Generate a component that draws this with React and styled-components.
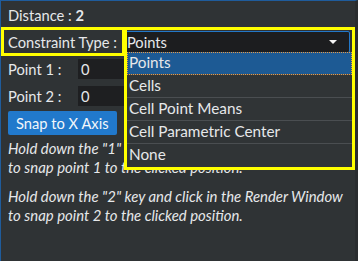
import React from "react";
import styled, { createGlobalStyle } from "styled-components";

const Global = createGlobalStyle`
  html, body {
    margin: 0;
    padding: 0;
    background: #2f3335;
  }
  body {
    font-family: Lato, "Open Sans", sans-serif;
    color: #e6e8ea;
  }
`;

const Panel = styled.div`
  position: relative;
  box-sizing: border-box;
  width: 358px;
  height: 261px;
  overflow: hidden;
  background: #2f3335;
  border-top: 1px solid #1f5c9c;
  border-left: 1px solid #1f5c9c;
  border-right: 3px solid #2a2d2f;
  padding: 0 0 0 7px;
  font-size: 14.7px;
`;

const Row = styled.div`
  display: flex;
  align-items: center;
  gap: 7px;
  height: ${(p) => p.$h || 27}px;
`;

const Label = styled.div`
  min-width: 63px;
  white-space: nowrap;
`;

const Strong = styled.span`
  font-weight: 700;
`;

const Select = styled.div`
  flex: 1;
  display: flex;
  align-items: center;
  justify-content: space-between;
  box-sizing: border-box;
  height: 22px;
  margin-right: 5px;
  padding: 0 12px 0 2px;
  background: #1c1d1f;
  border: 1px solid #2277c8;
  border-radius: 2px;
`;

const Caret = styled.span`
  width: 0;
  height: 0;
  border-left: 4px solid transparent;
  border-right: 4px solid transparent;
  border-top: 4px solid #f4f4f4;
`;

const Input = styled.div`
  flex: 1;
  box-sizing: border-box;
  height: 20px;
  padding: 1px 3px;
  background: #1e1f21;
  line-height: 18px;
`;

const Button = styled.button`
  height: 24px;
  padding: 0 8px;
  border: none;
  border-radius: 2px;
  background: #2179cc;
  color: #f2f6fa;
  font: inherit;
`;

const Hint = styled.p`
  margin: 2px 0 10px;
  font-style: italic;
  font-size: 14.9px;
  line-height: 19px;
`;

const Highlight = styled.div`
  position: absolute;
  box-sizing: border-box;
  left: ${(p) => p.$x}px;
  top: ${(p) => p.$y}px;
  width: ${(p) => p.$w}px;
  height: ${(p) => p.$h}px;
  border: 3px solid #ffff00;
  pointer-events: none;
`;

const Menu = styled.ul`
  position: absolute;
  left: 126px;
  top: 51px;
  width: 225px;
  margin: 0;
  padding: 0;
  list-style: none;
  background: #303436;
  font-size: 15.3px;
`;

const Item = styled.li`
  box-sizing: border-box;
  height: 23px;
  padding: 0 2px;
  line-height: 21px;
  border-bottom: 1px solid #4a4e51;
  background: ${(p) => (p.$active ? "#1d5a94" : "transparent")};
  outline: ${(p) => (p.$active ? "1px dotted #e39a4a" : "none")};
  outline-offset: -1px;
  &:last-child {
    border-bottom: none;
  }
`;

const options = [
  "Points",
  "Cells",
  "Cell Point Means",
  "Cell Parametric Center",
  "None",
];

export default function App() {
  return (
    <>
      <Global />
      <Panel>
        <Row $h={27}>
          <Label>
            Distance : <Strong>2</Strong>
          </Label>
        </Row>
        <Row $h={27}>
          <Label>Constraint Type :</Label>
          <Select>
            <span>Points</span>
            <Caret />
          </Select>
        </Row>
        <Row>
          <Label>Point 1 :</Label>
          <Input>0</Input>
        </Row>
        <Row>
          <Label>Point 2 :</Label>
          <Input>0</Input>
        </Row>
        <Row $h={28}>
          <Button>Snap to X Axis</Button>
        </Row>
        <Hint>
          Hold down the "1" key and click in the Render Window
          <br />
          to snap point 1 to the clicked position.
        </Hint>
        <Hint>
          Hold down the "2" key and click in the Render Window
          <br />
          to snap point 2 to the clicked position.
        </Hint>

        <Menu>
          {options.map((o, i) => (
            <Item key={o} $active={i === 0}>
              {o}
            </Item>
          ))}
        </Menu>
        <Highlight $x={0} $y={26} $w={124} $h={29} />
        <Highlight $x={123} $y={26} $w={231} $h={143} />
      </Panel>
    </>
  );
}
